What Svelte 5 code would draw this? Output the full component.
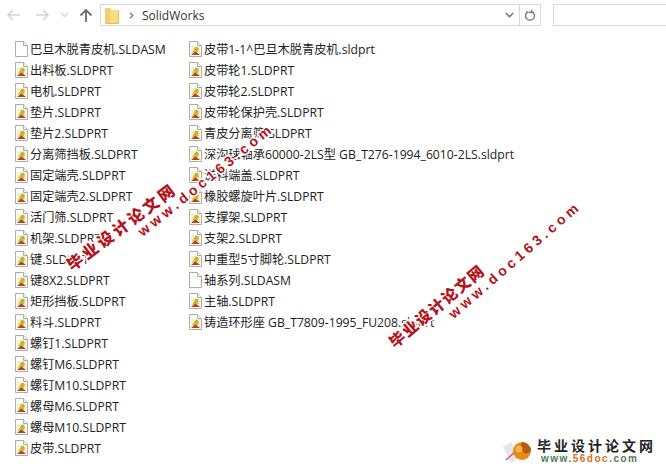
<script>
  const col1 = [
    ["巴旦木脱青皮机.SLDASM", "asm"], ["出料板.SLDPRT"], ["电机.SLDPRT"], ["垫片.SLDPRT"], ["垫片2.SLDPRT"],
    ["分离筛挡板.SLDPRT"], ["固定端壳.SLDPRT"], ["固定端壳2.SLDPRT"], ["活门筛.SLDPRT"], ["机架.SLDPRT"],
    ["键.SLDPRT"], ["键8X2.SLDPRT"], ["矩形挡板.SLDPRT"], ["料斗.SLDPRT"], ["螺钉1.SLDPRT"],
    ["螺钉M6.SLDPRT"], ["螺钉M10.SLDPRT"], ["螺母M6.SLDPRT"], ["螺母M10.SLDPRT"], ["皮带.SLDPRT"]
  ];
  const col2 = [
    ["皮带1-1^巴旦木脱青皮机.sldprt"], ["皮带轮1.SLDPRT"], ["皮带轮2.SLDPRT"], ["皮带轮保护壳.SLDPRT"], ["青皮分离筛.SLDPRT"],
    ["深沟球轴承60000-2LS型 GB_T276-1994_6010-2LS.sldprt"], ["送料端盖.SLDPRT"], ["橡胶螺旋叶片.SLDPRT"], ["支撑架.SLDPRT"], ["支架2.SLDPRT"],
    ["中重型5寸脚轮.SLDPRT"], ["轴系列.SLDASM", "asm"], ["主轴.SLDPRT"], ["铸造环形座 GB_T7809-1995_FU208.sldprt"]
  ];
  const marks = [
    { cn: "cn1", url: "url1" },
    { cn: "cn2", url: "url2" }
  ];
</script>

{#snippet fileRow(item)}
  <div class="row">
    <svg class="ficon" width="13" height="16" viewBox="0 0 13 16">
      <path d="M.5.5h8l4 4v11H.5z" fill="#fff" stroke="#ababab" />
      <path d="M8.500.5v4h4" fill="#f2f2f2" stroke="#ababab" />
      {#if item[1] !== "asm"}
        <rect x="2" y="5" width="9" height="9" fill="#f8efc8" />
        <path d="M3 12 6 6.500 10 7.500 9 11z" fill="#d9b92c" />
        <path d="M2 14 6.500 10.500 11 14z" fill="#b0402c" />
        <circle cx="7.500" cy="7.500" r="1.700" fill="#a2bd45" />
      {/if}
    </svg>
    <span>{item[0]}</span>
  </div>
{/snippet}

<div class="window">
  <div class="toolbar">
    <div class="nav">
      <svg width="16" height="14" viewBox="0 0 16 14"><path d="M14 7H2M7 2 2 7l5 5" fill="none" stroke="#d4d4d4" stroke-width="1.6" /></svg>
      <svg width="16" height="14" viewBox="0 0 16 14"><path d="M2 7h12M9 2l5 5-5 5" fill="none" stroke="#d4d4d4" stroke-width="1.6" /></svg>
      <svg width="9" height="6" viewBox="0 0 9 6"><path d="m1 1 3.5 3.5L8 1" fill="none" stroke="#d8d8d8" stroke-width="1.3" /></svg>
      <svg width="14" height="15" viewBox="0 0 14 15"><path d="M7 14V2M1.500 7.500 7 2l5.500 5.500" fill="none" stroke="#6d6d6d" stroke-width="1.800" /></svg>
    </div>
    <div class="address">
      <svg class="folder" width="14" height="17" viewBox="0 0 14 17">
        <path d="M0 1h6l1 2h7v14H0z" fill="#fbdc86" />
        <path d="M0 1h5v15H0z" fill="#f5cf6d" />
        <path d="M13.500 3v13.500H.5" fill="none" stroke="#e3bf62" />
      </svg>
      <svg width="5" height="7" viewBox="0 0 5 7"><path d="m1 .8 2.800 2.700L1 6.200" fill="none" stroke="#777" stroke-width="1.200" /></svg>
      <span class="path">SolidWorks</span>
      <svg class="drop" width="9" height="6" viewBox="0 0 9 6"><path d="m.7 1 3.800 3.600L8.300 1" fill="none" stroke="#777" stroke-width="1.500" /></svg>
      <div class="refresh">
        <svg width="12" height="13" viewBox="0 0 12 13"><path d="M4.500 2.500a4.500 4.500 0 1 0 3 0M7.500 .8v2.700H4.800" fill="none" stroke="#7d7d7d" stroke-width="1.400" /></svg>
      </div>
    </div>
    <div class="search"></div>
  </div>

  <div class="files">
    <div class="col first">
      {#each col1 as item}{@render fileRow(item)}{/each}
    </div>
    <div class="col">
      {#each col2 as item}{@render fileRow(item)}{/each}
    </div>
  </div>

  {#each marks as m}
    <div class="mark {m.cn}">毕业设计论文网</div>
    <div class="mark web {m.url}">www.doc163.com</div>
  {/each}

  <div class="logo">
    <svg width="31" height="24" viewBox="0 0 31 24">
      <path d="M1 7 9 2l8 16-8 5z" fill="#e4e4e4" />
      <path d="M4 20 14 11" stroke="#d0589a" stroke-width="1.500" />
      <circle cx="20" cy="11" r="9" fill="#e8891c" />
      <path d="M20 2a9 9 0 0 1 9 9l-5 3-6-5z" fill="#b55a12" />
      <circle cx="17" cy="9" r="3.500" fill="#f4b648" />
    </svg>
    <div class="brand">
      <div class="brand-cn">毕业设计论文网</div>
      <div class="brand-url">www.<b>56doc</b>.com</div>
    </div>
  </div>
</div>

<style>
  :global(body) {
    margin: 0;
    background: #fff;
  }
  .window {
    position: relative;
    width: 666px;
    height: 471px;
    overflow: hidden;
    background: #fff;
    font-family: "Open Sans", "Noto Sans CJK SC", sans-serif;
    color: #222;
  }
  .toolbar {
    display: flex;
    align-items: center;
    height: 22px;
    padding-top: 4px;
  }
  .nav {
    display: flex;
    align-items: center;
    width: 100px;
    padding-left: 6px;
    box-sizing: border-box;
    gap: 12px;
  }
  .nav svg:nth-child(3) { margin-left: -2px; }
  .nav svg:nth-child(4) { margin-left: -2px; }
  .address {
    display: flex;
    align-items: center;
    width: 441px;
    height: 22px;
    box-sizing: border-box;
    border: 1px solid #d9d9d9;
    padding-left: 4px;
  }
  .folder { margin-right: 10px; }
  .path {
    margin-left: 8px;
    font-size: 12px;
    color: #333;
  }
  .drop { margin-left: auto; margin-right: 5px; }
  .refresh {
    display: flex;
    align-items: center;
    justify-content: center;
    width: 20px;
    height: 100%;
    border-left: 1px solid #d9d9d9;
  }
  .search {
    width: 113px;
    height: 22px;
    box-sizing: border-box;
    margin-left: 12px;
    border: 1px solid #d9d9d9;
    border-right: 0;
  }
  .files {
    display: flex;
    padding: 12px 0 0 15px;
  }
  .col.first { width: 174px; }
  .row {
    display: flex;
    align-items: center;
    gap: 2px;
    height: 21.05px;
    font-size: 12.2px;
    white-space: nowrap;
  }
  .ficon { flex: none; }
  .mark {
    position: absolute;
    transform-origin: left bottom;
    white-space: nowrap;
    color: #b3131b;
    font-family: "Noto Sans CJK SC", sans-serif;
    font-weight: 900;
    font-size: 16px;
    line-height: 20px;
    -webkit-text-stroke: 3px #fff;
    paint-order: stroke fill;
  }
  .web {
    font-family: "Liberation Sans", sans-serif;
    font-weight: 700;
    font-size: 14px;
    letter-spacing: 3.800px;
  }
  .cn1 { left: 74px; top: 254px; letter-spacing: 3px; transform: rotate(-37deg); }
  .url1 { left: 146px; top: 221px; transform: rotate(-39deg); }
  .cn2 { left: 397px; top: 331px; letter-spacing: 1.500px; font-size: 15.500px; transform: rotate(-40deg); }
  .url2 { left: 457px; top: 303px; transform: rotate(-41deg); }
  .logo {
    position: absolute;
    right: 10px;
    bottom: 6px;
    display: flex;
    align-items: center;
    gap: 4px;
  }
  .brand-cn {
    font-family: "Noto Sans CJK SC", sans-serif;
    font-weight: 700;
    font-size: 14px;
    line-height: 15px;
    letter-spacing: 3px;
    color: #222;
    white-space: nowrap;
  }
  .brand-url {
    font-family: "Liberation Sans", sans-serif;
    font-weight: 700;
    font-size: 10px;
    line-height: 12px;
    letter-spacing: 1.500px;
    padding-left: 4px;
    color: #4e7a5a;
  }
  .brand-url b { color: #d8701e; }
</style>
